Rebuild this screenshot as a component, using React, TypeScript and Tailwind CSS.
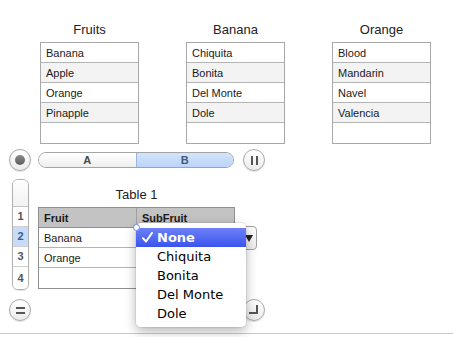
import React from "react";

const lists = [
  { title: "Fruits", items: ["Banana", "Apple", "Orange", "Pinapple", ""] },
  { title: "Banana", items: ["Chiquita", "Bonita", "Del Monte", "Dole", ""] },
  { title: "Orange", items: ["Blood", "Mandarin", "Navel", "Valencia", ""] },
];

const popupItems = ["Chiquita", "Bonita", "Del Monte", "Dole"];

function RoundButton({ children }: { children: React.ReactNode }) {
  return (
    <div className="w-[22px] h-[22px] rounded-full border border-[#a9a9a9] bg-gradient-to-b from-white to-[#ececec] shadow-[0_1px_1px_rgba(0,0,0,0.12)] flex items-center justify-center shrink-0">
      {children}
    </div>
  );
}

export default function App() {
  return (
    <div className="relative w-[453px] h-[337px] bg-white overflow-hidden font-['Liberation_Sans',Arial,sans-serif] text-[#1a1a1a]">
      {/* three lists */}
      <div className="flex gap-[47px] pl-[40px] pt-[22px]">
        {lists.map((list) => (
          <div key={list.title} className="w-[99px]">
            <div className="h-[16px] leading-[16px] mb-[4px] text-center text-[13px] text-[#222]">{list.title}</div>
            <div className="border border-[#a8a8a8]">
              {list.items.map((item, i) => (
                <div
                  key={i}
                  className={`h-[20px] leading-[20px] px-[5px] text-[11px] ${i < 4 ? "border-b border-[#b4b4b4]" : ""} ${i % 2 === 1 ? "bg-[#f3f3f3]" : "bg-white"}`}
                >
                  {item}
                </div>
              ))}
            </div>
          </div>
        ))}
      </div>

      {/* segmented control row */}
      <div className="flex items-center h-[22px] mt-[5px] pl-[9px]">
        <RoundButton>
          <div className="w-[10px] h-[10px] rounded-full bg-gradient-to-b from-[#8a8a8a] to-[#5e5e5e]" />
        </RoundButton>
        <div className="ml-[7px] w-[196px] h-[16px] flex rounded-full border border-[#a4a4a4] overflow-hidden text-[11px] font-bold">
          <div className="flex-1 flex items-center justify-center bg-gradient-to-b from-white to-[#eeeeee] text-[#4a4a4a] border-r border-[#9ab4da]">A</div>
          <div className="flex-1 flex items-center justify-center bg-gradient-to-b from-[#d3e4fc] to-[#bcd4f7] text-[#3f5a80]">B</div>
        </div>
        <div className="ml-[9px]">
          <RoundButton>
            <div className="flex gap-[3px]">
              <div className="w-[2px] h-[9px] bg-[#555]" />
              <div className="w-[2px] h-[9px] bg-[#555]" />
            </div>
          </RoundButton>
        </div>
      </div>

      {/* table section */}
      <div className="flex mt-[8px] pl-[12px]">
        <div className="w-[17px] border border-[#b0b0b0] rounded-[6px] overflow-hidden text-[11px] font-bold text-[#555] shadow-[0_1px_1px_rgba(0,0,0,0.1)]">
          <div className="h-[27px] border-b border-[#c4c4c4] bg-gradient-to-b from-white to-[#f2f2f2]" />
          {["1", "2", "3", "4"].map((n) => (
            <div
              key={n}
              className={`flex items-center justify-center ${n !== "4" ? "h-[20px] border-b border-[#d0d0d0]" : "h-[22px]"} ${n === "2" ? "bg-[#c6dcfa] text-[#3a5a8a]" : "bg-white"}`}
            >
              {n}
            </div>
          ))}
        </div>
        <div className="ml-[9px] w-[197px]">
          <div className="h-[28px] pt-[8px] text-center text-[13px] leading-[16px] text-[#222]">Table 1</div>
          <div className="border border-[#8f8f8f]">
            <div className="flex h-[20px] bg-[#c3c3c3] border-b border-[#8f8f8f] text-[11px] font-bold">
              <div className="w-[98px] border-r border-[#a0a0a0] pl-[5px] leading-[20px]">Fruit</div>
              <div className="flex-1 pl-[5px] leading-[20px]">SubFruit</div>
            </div>
            {["Banana", "Orange", ""].map((f, i) => (
              <div key={i} className={`flex h-[20px] text-[11px] ${i < 2 ? "border-b border-[#b4b4b4]" : ""}`}>
                <div className="w-[98px] border-r border-[#b4b4b4] pl-[5px] leading-[20px]">{f}</div>
                <div className="flex-1" />
              </div>
            ))}
          </div>
        </div>
      </div>

      {/* bottom buttons */}
      <div className="flex items-center mt-[9px] pl-[9px]">
        <RoundButton>
          <div className="flex flex-col gap-[3px]">
            <div className="w-[9px] h-[2px] bg-[#555]" />
            <div className="w-[9px] h-[2px] bg-[#555]" />
          </div>
        </RoundButton>
        <div className="ml-[212px]">
          <RoundButton>
            <div className="w-[9px] h-[9px] border-r-2 border-b-2 border-[#555] -mt-[1px] -ml-[1px]" />
          </RoundButton>
        </div>
      </div>

      <div className="absolute left-0 right-0 top-[333px] border-t border-[#c8c8c8]" />

      {/* popup button behind the menu */}
      <div className="absolute left-[240px] top-[226px] w-[17px] h-[24px] rounded-r-[4px] border border-[#a0a0a0] bg-gradient-to-b from-white to-[#eeeeee] flex items-center justify-end pr-[3px]">
        <div className="w-0 h-0 border-l-[4px] border-r-[4px] border-t-[7px] border-l-transparent border-r-transparent border-t-[#222]" />
      </div>

      {/* cell edit border */}
      <div className="absolute left-[136px] top-[227px] w-[1px] h-[22px] bg-[#7d9ad8]" />

      {/* popup menu */}
      <div className="absolute left-[136px] top-[223px] w-[110px] h-[104px] rounded-[5px] bg-white/[0.98] shadow-[0_4px_12px_rgba(0,0,0,0.3),0_0_0_1px_rgba(0,0,0,0.06)] pt-[5px] font-['DejaVu_Sans',sans-serif] text-[13px]">
        <div className="h-[19px] flex items-center bg-gradient-to-b from-[#6d80f7] to-[#3b52ee] text-white">
          <div className="w-[21px] pl-[6px] flex items-center">
            <svg width="11" height="11" viewBox="0 0 11 11" fill="none">
              <path d="M1 6.2 L4 9.5 L10 1" stroke="white" strokeWidth="2" strokeLinecap="round" strokeLinejoin="round" />
            </svg>
          </div>
          <span className="font-bold">None</span>
        </div>
        {popupItems.map((p) => (
          <div key={p} className="h-[19px] flex items-center pl-[21px] text-black">
            {p}
          </div>
        ))}
      </div>

      {/* selection handle */}
      <div className="absolute left-[133px] top-[224px] w-[7px] h-[7px] rounded-full border border-[#6b8ed6] bg-white" />
    </div>
  );
}
